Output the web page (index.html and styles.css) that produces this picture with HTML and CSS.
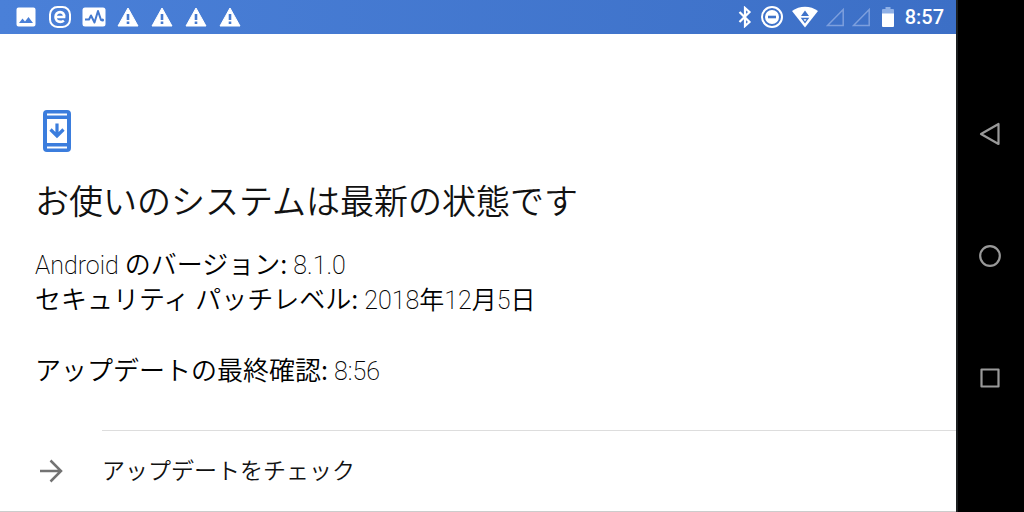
FILE: index.html
```
<!DOCTYPE html>
<html lang="ja">
<head>
  <meta charset="UTF-8">
  <meta name="viewport" content="width=device-width, initial-scale=1">
  <title>システム アップデート</title>
  <link rel="stylesheet" href="styles.css">
</head>
<body>
  <div class="screen">
    <!-- Status bar: notifications on the left, system icons on the right -->
    <header class="status-bar">
      <div class="notifications">
        <svg class="status-icon" viewBox="0 0 24 24">
          <path fill="#fff" fill-rule="evenodd" d="M4.500 2.500h15a2 2 0 0 1 2 2v15a2 2 0 0 1-2 2h-15a2 2 0 0 1-2-2v-15a2 2 0 0 1 2-2zM5 18h14l-4.500-6-3.500 4.500-2.500-3z"/>
        </svg>
        <svg class="status-icon" viewBox="0 0 24 24">
          <rect x="2" y="2" width="20" height="20" rx="7.500" fill="none" stroke="#fff" stroke-width="2"/>
          <path fill="none" stroke="#fff" stroke-width="2.600" d="M7.500 12h8.600c.3-3-1.500-4.900-4-4.900-2.700 0-4.600 2-4.600 4.900s1.900 4.900 4.800 4.900c1.400 0 2.600-.4 3.600-1.300"/>
        </svg>
        <svg class="status-icon" viewBox="0 0 24 24">
          <rect x="0.500" y="2.500" width="23" height="19" rx="2.500" fill="#fff"/>
          <path fill="none" stroke="#4479cf" stroke-width="2" stroke-linejoin="round" d="M3 14.500h4l2-4 3.500 7L16 6l3 9h2"/>
          <circle cx="20.500" cy="15" r="1.600" fill="#4479cf"/>
        </svg>
        <svg class="status-icon" viewBox="0 0 24 24"><path fill="#fff" stroke="#fff" stroke-linejoin="round" d="M2 21h20L12 3z"/><path fill="#4479cf" d="M10.700 9h2.600v6h-2.600zM10.700 16.500h2.600V19h-2.600z"/></svg>
        <svg class="status-icon" viewBox="0 0 24 24"><path fill="#fff" stroke="#fff" stroke-linejoin="round" d="M2 21h20L12 3z"/><path fill="#4479cf" d="M10.700 9h2.600v6h-2.600zM10.700 16.500h2.600V19h-2.600z"/></svg>
        <svg class="status-icon" viewBox="0 0 24 24"><path fill="#fff" stroke="#fff" stroke-linejoin="round" d="M2 21h20L12 3z"/><path fill="#4479cf" d="M10.700 9h2.600v6h-2.600zM10.700 16.500h2.600V19h-2.600z"/></svg>
        <svg class="status-icon" viewBox="0 0 24 24"><path fill="#fff" stroke="#fff" stroke-linejoin="round" d="M2 21h20L12 3z"/><path fill="#4479cf" d="M10.700 9h2.600v6h-2.600zM10.700 16.500h2.600V19h-2.600z"/></svg>
      </div>
      <div class="system">
        <svg class="bluetooth-icon" viewBox="0 0 14 22">
          <path fill="none" stroke="#fff" stroke-width="2.200" d="M1.500 6l10 10L7 20V2l4.500 4-10 10"/>
        </svg>
        <svg class="status-icon" viewBox="0 0 24 24">
          <circle cx="12" cy="12" r="10" fill="none" stroke="#fff" stroke-width="2"/>
          <circle cx="12" cy="12" r="7" fill="#fff"/>
          <path fill="#3f73ca" d="M8 10.700h8v2.600H8z"/>
        </svg>
        <svg class="wifi-icon" viewBox="0 0 26 22">
          <path fill="#fff" d="M0 5C7.500-.7 18.500-.7 26 5L13 21.500z"/>
          <path fill="#3f73ca" d="M9 10l4-5.500L17 10z"/>
          <path fill="none" stroke="#3f73ca" stroke-width="1.300" d="M10 12.500h6l-3 4z"/>
        </svg>
        <svg class="signal-icon" viewBox="0 0 18 20"><path fill="none" stroke="#7d9fdd" stroke-width="1.500" d="M1.500 18.500h15.700v-16z"/></svg>
        <svg class="signal-icon" viewBox="0 0 18 20"><path fill="none" stroke="#7d9fdd" stroke-width="1.500" d="M1.500 18.500h15.700v-16z"/></svg>
        <svg class="battery-icon" viewBox="0 0 12 20">
          <path fill="#8fb0e6" d="M3.500 0h5v2H11a1 1 0 0 1 1 1v4H0V3a1 1 0 0 1 1-1h2.500z"/>
          <path fill="#fff" d="M0 6.500h12V19a1 1 0 0 1-1 1H1a1 1 0 0 1-1-1z"/>
        </svg>
        <time class="clock">8:57</time>
      </div>
    </header>

    <main class="content">
      <svg class="update-icon" viewBox="0 0 28 42">
        <path fill="#3b7ddd" fill-rule="evenodd" d="M4 0h20a4 4 0 0 1 4 4v34a4 4 0 0 1-4 4H4a4 4 0 0 1-4-4V4a4 4 0 0 1 4-4zM4 3.500v2h20v-2zM4 9v24h20V9zM4 36.500v2h20v-2z"/>
        <path fill="none" stroke="#3b7ddd" stroke-width="3.200" d="M14 13.500v12M7.500 19.500l6.500 6.500 6.500-6.500"/>
      </svg>
      <h1>お使いのシステムは最新の状態です</h1>
      <p>Android <span class="label">のバージョン:</span> 8.1.0</p>
      <p><span class="label">セキュリティ パッチレベル:</span> 2018<span class="kanji">年</span>12<span class="kanji">月</span>5<span class="kanji">日</span></p>
      <p class="last-check"><span class="label">アップデートの最終確認:</span> 8:56</p>
    </main>

    <button class="check-button" type="button">
      <svg class="arrow-icon" viewBox="0 0 24 24"><path fill="none" stroke="#737373" stroke-width="2.500" d="M1 12h20.500M11.500 1.500L22 12 11.500 22.500"/></svg>
      <span class="check-label">アップデートをチェック</span>
    </button>
  </div>

  <!-- Navigation bar -->
  <nav class="nav-bar">
    <button type="button" aria-label="戻る">
      <svg viewBox="0 0 24 24"><path fill="none" stroke="#999" stroke-width="2.200" stroke-linejoin="round" d="M20.500 2v20L3 12z"/></svg>
    </button>
    <button type="button" aria-label="ホーム">
      <svg viewBox="0 0 24 24"><circle cx="12" cy="12" r="9.800" fill="none" stroke="#999" stroke-width="2.200"/></svg>
    </button>
    <button type="button" aria-label="履歴">
      <svg viewBox="0 0 24 24"><rect x="3.500" y="3.500" width="17" height="17" fill="none" stroke="#999" stroke-width="2.200" stroke-linejoin="round"/></svg>
    </button>
  </nav>
</body>
</html>
```
FILE: styles.css
```
* {
  box-sizing: border-box;
}
body {
  display: flex;
  min-height: 100vh;
  margin: 0;
  background-color: #fff;
  color: #111;
  font-family: Roboto, "Noto Sans CJK JP", sans-serif;
}
button {
  border: none;
  background: none;
  color: inherit;
  font-family: inherit;
  cursor: pointer;
}
svg {
  display: block;
  flex: none;
}
.screen {
  flex: 1;
  display: flex;
  flex-direction: column;
}

/* Status bar */
.status-bar {
  display: flex;
  align-items: center;
  justify-content: space-between;
  height: 34px;
  padding: 0 12px 0 14px;
  background: linear-gradient(to right, #4a80d8, #3c6fc6);
}
.notifications {
  display: flex;
  gap: 10px;
}
.system {
  display: flex;
  align-items: center;
  gap: 8px;
}
.status-icon {
  width: 24px;
  height: 24px;
}
.bluetooth-icon {
  width: 14px;
  height: 22px;
}
.wifi-icon {
  width: 26px;
  height: 22px;
}
.signal-icon {
  width: 18px;
  height: 20px;
}
.battery-icon {
  width: 12px;
  height: 20px;
  margin: 0 3px 0 4px;
}
.clock {
  color: #fff;
  font-size: 20px;
  font-weight: 500;
  line-height: 34px;
}

/* Update information */
.content {
  flex: 1;
  padding: 76px 35px 32px;
}
.update-icon {
  width: 28px;
  height: 42px;
  margin-left: 8px;
}
h1 {
  margin: 26px 0 22px;
  font-size: 34px;
  font-weight: 350;
  line-height: 48px;
}
p {
  margin: 0;
  color: #000;
  font-size: 25px;
  font-weight: 200;
  line-height: 35px;
}
.label,
.kanji {
  font-family: "Noto Sans CJK JP", sans-serif;
  font-weight: 350;
  line-height: 1;
}
.label {
  font-size: 26px;
}
.last-check {
  margin-top: 36px;
}

/* Check row */
.check-button {
  display: flex;
  align-items: stretch;
  height: 82px;
  padding: 0;
  border-bottom: 1px solid #ccc;
  text-align: left;
}
.arrow-icon {
  width: 24px;
  height: 24px;
  margin: 0 39px;
  align-self: center;
}
.check-label {
  flex: 1;
  border-top: 1px solid #ddd;
  font-size: 23px;
  font-weight: 350;
  line-height: 82px;
}

/* Navigation bar */
.nav-bar {
  display: flex;
  flex-direction: column;
  align-items: center;
  justify-content: center;
  gap: 74px;
  width: 68px;
  padding-right: 2px;
  border-left: 2px solid #1c1f20;
  background-color: #000;
}
.nav-bar button {
  padding: 12px;
}
.nav-bar svg {
  width: 24px;
  height: 24px;
}
```
